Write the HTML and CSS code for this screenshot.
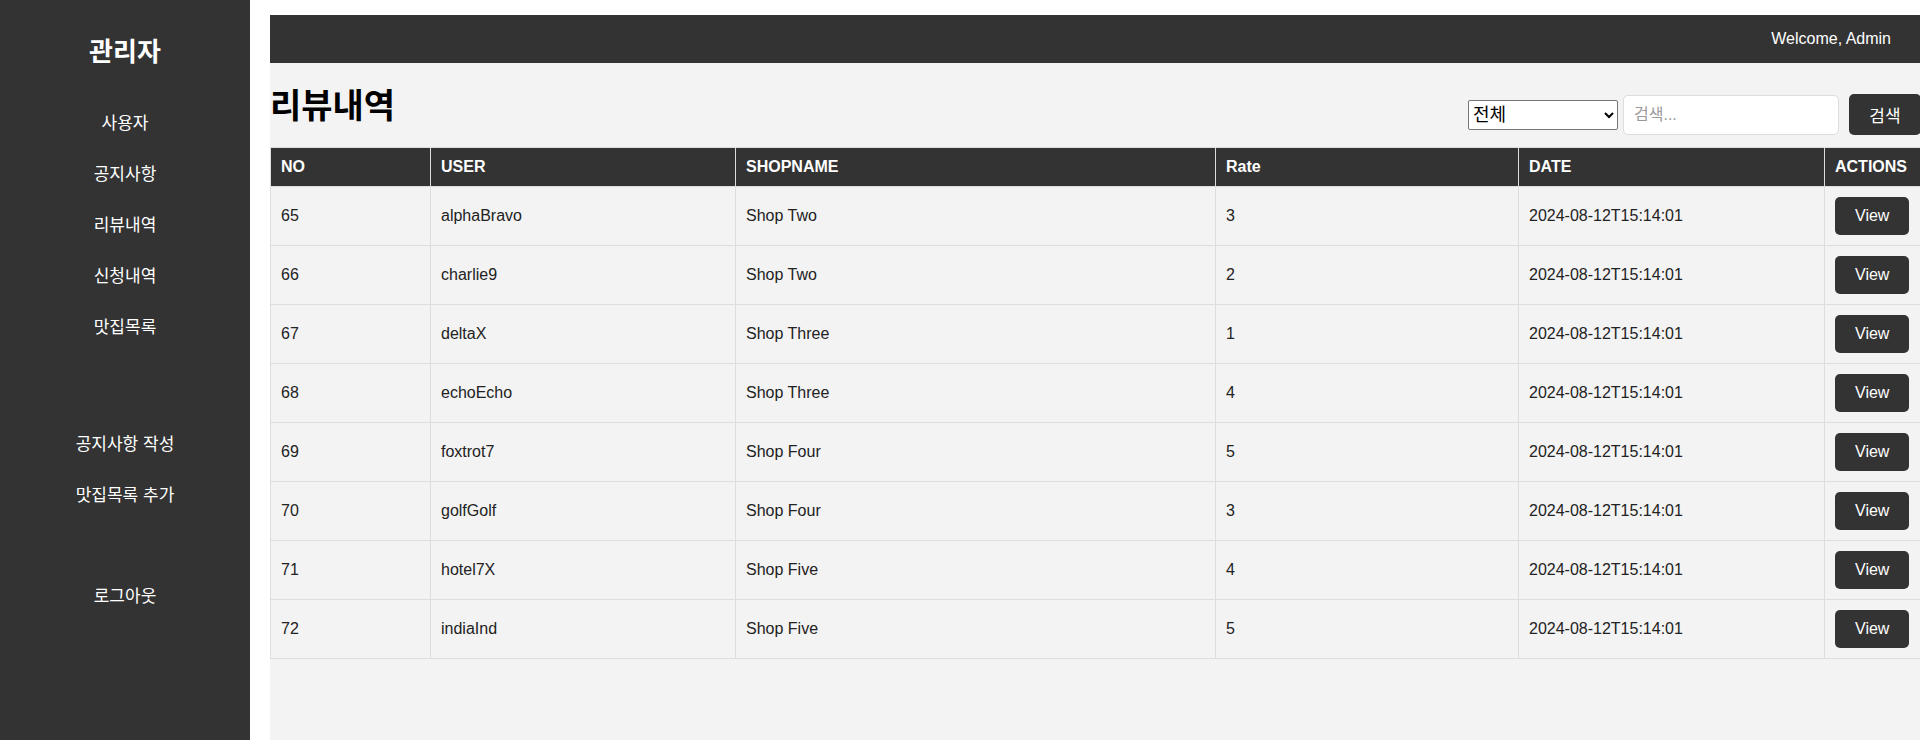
FILE: index.html
```html
<!DOCTYPE html>
<html lang="ko">
<head>
<meta charset="utf-8">
<title>리뷰내역</title>
<link rel="stylesheet" href="styles.css">
</head>
<body>
<aside class="sidebar">
  <h2 class="sidebar-title">관리자</h2>
  <nav class="menu">
    <a href="#">사용자</a>
    <a href="#">공지사항</a>
    <a href="#">리뷰내역</a>
    <a href="#">신청내역</a>
    <a href="#">맛집목록</a>
  </nav>
  <nav class="menu menu-create">
    <a href="#">공지사항 작성</a>
    <a href="#">맛집목록 추가</a>
  </nav>
  <nav class="menu menu-logout">
    <a href="#">로그아웃</a>
  </nav>
</aside>
<div class="main">
  <header class="topbar"><span>Welcome, Admin</span></header>
  <div class="toolbar">
    <h1 class="page-title">리뷰내역</h1>
    <form class="search">
      <select class="search-select">
        <option>전체</option>
      </select>
      <input class="search-input" type="text" placeholder="검색...">
      <button class="search-btn" type="button">검색</button>
    </form>
  </div>
  <table class="review-table">
    <colgroup>
      <col class="c-no"><col class="c-user"><col class="c-shop"><col class="c-rate"><col class="c-date"><col class="c-act">
    </colgroup>
    <thead>
      <tr><th>NO</th><th>USER</th><th>SHOPNAME</th><th>Rate</th><th>DATE</th><th>ACTIONS</th></tr>
    </thead>
    <tbody>
      <tr><td>65</td><td>alphaBravo</td><td>Shop Two</td><td>3</td><td>2024-08-12T15:14:01</td><td><button class="view-btn" type="button">View</button></td></tr>
      <tr><td>66</td><td>charlie9</td><td>Shop Two</td><td>2</td><td>2024-08-12T15:14:01</td><td><button class="view-btn" type="button">View</button></td></tr>
      <tr><td>67</td><td>deltaX</td><td>Shop Three</td><td>1</td><td>2024-08-12T15:14:01</td><td><button class="view-btn" type="button">View</button></td></tr>
      <tr><td>68</td><td>echoEcho</td><td>Shop Three</td><td>4</td><td>2024-08-12T15:14:01</td><td><button class="view-btn" type="button">View</button></td></tr>
      <tr><td>69</td><td>foxtrot7</td><td>Shop Four</td><td>5</td><td>2024-08-12T15:14:01</td><td><button class="view-btn" type="button">View</button></td></tr>
      <tr><td>70</td><td>golfGolf</td><td>Shop Four</td><td>3</td><td>2024-08-12T15:14:01</td><td><button class="view-btn" type="button">View</button></td></tr>
      <tr><td>71</td><td>hotel7X</td><td>Shop Five</td><td>4</td><td>2024-08-12T15:14:01</td><td><button class="view-btn" type="button">View</button></td></tr>
      <tr><td>72</td><td>indiaInd</td><td>Shop Five</td><td>5</td><td>2024-08-12T15:14:01</td><td><button class="view-btn" type="button">View</button></td></tr>
    </tbody>
  </table>
</div>
</body>
</html>
```

FILE: styles.css
```css
* { box-sizing: border-box; }

html, body {
  margin: 0;
  padding: 0;
}

body {
  display: flex;
  min-height: 100vh;
  background: #ffffff;
  font-family: "Liberation Sans", "Noto Sans CJK KR", Arial, sans-serif;
  font-size: 16px;
  color: #222;
}

/* Sidebar */
.sidebar {
  width: 250px;
  flex-shrink: 0;
  background: #333333;
  color: #ffffff;
  padding-top: 37px;
}

.sidebar-title {
  margin: 0 0 31px;
  font-size: 26px;
  line-height: 30px;
  font-weight: bold;
  text-align: center;
}

.menu {
  display: flex;
  flex-direction: column;
}

.menu a {
  display: block;
  padding: 15px 0;
  line-height: 21px;
  font-size: 17px;
  color: #ffffff;
  text-decoration: none;
  text-align: center;
}

.menu-create { margin-top: 66px; }
.menu-logout { margin-top: 50px; }

/* Main */
.main {
  flex: 1;
  margin: 15px 0 0 20px;
  background: #f3f3f3;
  display: flex;
  flex-direction: column;
}

.topbar {
  height: 48px;
  background: #333333;
  color: #ffffff;
  display: flex;
  align-items: center;
  justify-content: flex-end;
  padding-right: 30px;
  font-size: 16px;
}

.toolbar {
  height: 84px;
  display: flex;
  justify-content: space-between;
  align-items: flex-start;
}

.page-title {
  margin: 23px 0 0;
  font-size: 34px;
  line-height: 40px;
  font-weight: bold;
  color: #000;
}

.search {
  margin: 31px 0 0;
  display: flex;
  align-items: center;
}

.search-select {
  width: 150px;
  height: 30px;
  font-family: "Liberation Sans", "Noto Sans CJK KR", sans-serif;
  font-size: 18px;
  background: #ffffff;
  color: #000;
  border: 1px solid #767676;
  border-radius: 2px;
}

.search-input {
  width: 216px;
  height: 40px;
  margin-left: 5px;
  padding: 0 10px;
  border: 1px solid #dddddd;
  border-radius: 5px;
  background: #ffffff;
  font-family: "Liberation Sans", "Noto Sans CJK KR", sans-serif;
  font-size: 16px;
}

.search-input::placeholder { color: #9a9a9a; }

.search-btn {
  width: 72px;
  height: 41px;
  margin-left: 10px;
  padding: 0;
  border: none;
  border-radius: 5px;
  background: #333333;
  color: #ffffff;
  font-family: "Liberation Sans", "Noto Sans CJK KR", sans-serif;
  font-size: 17px;
}

/* Table */
.review-table {
  width: 100%;
  border-collapse: collapse;
  table-layout: fixed;
}

.c-no { width: 160px; }
.c-user { width: 305px; }
.c-shop { width: 480px; }
.c-rate { width: 303px; }
.c-date { width: 306px; }
.c-act { width: 96px; }

.review-table th,
.review-table td {
  border: 1px solid #dddddd;
  padding: 10px;
  text-align: left;
  font-size: 16px;
  line-height: 18px;
}

.review-table th {
  background: #333333;
  color: #ffffff;
  font-weight: bold;
}

.review-table td { color: #222; }

.view-btn {
  display: block;
  padding: 10px 20px;
  line-height: 18px;
  border: none;
  border-radius: 5px;
  background: #333333;
  color: #ffffff;
  font-family: "Liberation Sans", Arial, sans-serif;
  font-size: 16px;
}
```
